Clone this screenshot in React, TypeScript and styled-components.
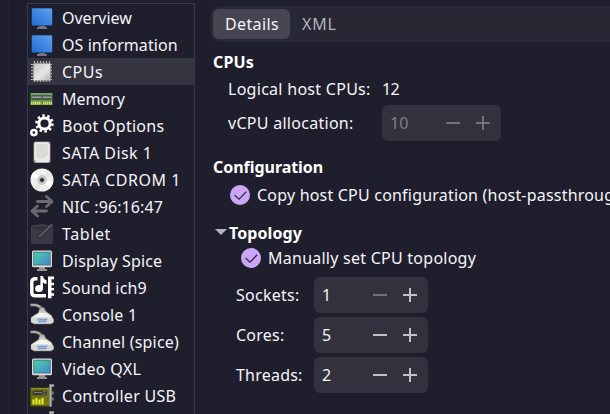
import React from 'react';
import styled, { createGlobalStyle } from 'styled-components';

const Global = createGlobalStyle`
  * { box-sizing: border-box; }
  html, body { margin: 0; height: 100%; overflow: hidden; background: #1f1e2d; }
  body { font: 16px/24px "Noto Sans", sans-serif; color: #f5f5f8; }
`;

const Window = styled.div`
  display: flex;
  width: 610px;
  height: 414px;
  overflow: hidden;
  background: linear-gradient(90deg, #1f1e2d 0 9px, #1b1a28 14px, #1f1e2d 16px);
`;

const DeviceList = styled.nav`
  flex: none;
  width: 168px;
  height: 440px;
  margin: 3px 0 0 27px;
  border: 1px solid #393846;
`;

const DeviceRow = styled.div<{ $selected?: boolean }>`
  display: flex;
  align-items: center;
  height: 27px;
  padding-left: 2px;
  gap: 8px;
  background: ${p => (p.$selected ? '#353441' : 'transparent')};
`;

const Icon = styled.svg`
  flex: none;
  width: 24px;
  height: 24px;
  display: block;
`;

const Text = styled.span<{ $track?: number; $dim?: boolean }>`
  white-space: nowrap;
  letter-spacing: ${p => p.$track ?? 0}px;
  color: ${p => (p.$dim ? '#b4b3ba' : 'inherit')};
`;

const Details = styled.main`
  flex: none;
  width: 430px;
  padding: 6px 0 0 15px;
`;

const TabBar = styled.div`
  display: flex;
  height: 36px;
  padding: 3px;
  border-radius: 9px;
  background: #282734;
`;

const Tab = styled.div<{ $active?: boolean }>`
  display: flex;
  align-items: center;
  height: 30px;
  padding: 0 12px;
  width: ${p => (p.$active ? '77px' : 'auto')};
  border-radius: 6px;
  background: ${p => (p.$active ? '#464551' : 'transparent')};
`;

const Heading = styled.h2<{ $top: number; $track?: number }>`
  display: flex;
  align-items: center;
  height: 24px;
  margin: ${p => p.$top}px 0 0 3px;
  font: bold 16px/24px "Noto Sans", sans-serif;
  letter-spacing: ${p => p.$track ?? 0}px;
  color: #fff;
`;

const Field = styled.div<{ $top: number; $indent: number; $label: number; $tall?: boolean }>`
  display: grid;
  grid-template-columns: ${p => p.$label}px auto;
  justify-content: start;
  align-items: center;
  height: ${p => (p.$tall ? 36 : 24)}px;
  margin: ${p => p.$top}px 0 0 ${p => p.$indent}px;
`;

const CheckRow = styled.div<{ $top: number; $indent: number; $gap: number }>`
  display: flex;
  align-items: center;
  gap: ${p => p.$gap}px;
  height: 24px;
  margin: ${p => p.$top}px 0 0 ${p => p.$indent}px;
`;

const CheckMark = styled.svg`
  flex: none;
  width: 20px;
  height: 20px;
`;

const Arrow = styled.svg`
  flex: none;
  width: 12px;
  height: 6px;
  margin: -2px 2px 0 2px;
`;

const SpinBox = styled.div<{ $width: number; $disabled?: boolean }>`
  display: flex;
  align-items: center;
  width: ${p => p.$width}px;
  height: 36px;
  padding: 0 11px 0 8px;
  border-radius: 6px;
  background: #32313e;
  color: ${p => (p.$disabled ? '#7f7e87' : 'inherit')};
`;

const SpinValue = styled.span`
  flex: 1;
`;

const SpinGlyph = styled.svg<{ $dim?: boolean }>`
  width: 14px;
  height: 14px;
  margin-left: 16px;
  fill: ${p => (p.$dim ? '#73727c' : '#c1c0c5')};
`;

type Kind = 'monitor' | 'chip' | 'memory' | 'gears' | 'disk' | 'cd' | 'net' | 'tablet' | 'display' | 'sound' | 'serial' | 'card';

const drawings: Record<Kind, React.ReactNode> = {
  monitor: (
    <>
      <defs>
        <linearGradient id="blue" x1="0" y1="1" x2="1" y2="0">
          <stop stopColor="#1f6fd6" /><stop offset="1" stopColor="#629fe9" />
        </linearGradient>
      </defs>
      <path d="M9 19h6v2h2v2H7v-2h2z" fill="#77767b" />
      <rect x="1.5" y="2" width="21" height="18" rx="1.5" fill="#164f96" />
      <rect x="2" y="2.5" width="20" height="16.5" rx="1" fill="url(#blue)" />
    </>
  ),
  chip: (
    <>
      <defs>
        <linearGradient id="chip" x1="0" y1="0" x2="1" y2="1">
          <stop stopColor="#c2c2c0" /><stop offset=".55" stopColor="#e6e6e4" /><stop offset="1" stopColor="#b4b4b2" />
        </linearGradient>
      </defs>
      <path d="M4.500 1v21M7.500 1v21M10.500 1v21M13.500 1v21M16.500 1v21M19.500 1v21M1 4.500h21M1 7.500h21M1 10.500h21M1 13.500h21M1 16.500h21M1 19.500h21" stroke="#b9b9b6" strokeWidth="1.1" />
      <rect x="3.200" y="3.200" width="17.600" height="17.600" rx="1" fill="url(#chip)" stroke="#7d7d7a" strokeWidth=".8" />
    </>
  ),
  memory: (
    <>
      <rect x=".5" y="6" width="22" height="12" fill="#468646" />
      <path d="M1 7h21" stroke="#a0bd93" />
      <path d="M2 8.200h9.300v4.600H2zM12.700 8.200H21v4.600h-8.300z" fill="#4b4b4b" />
      <path d="M2 10.200h9.300M12.700 10.200H21" stroke="#a3a39e" strokeWidth="1.400" />
      <path d="M12 7v10" stroke="#2f7b35" strokeWidth="1.200" />
      <path d="M1 14h21" stroke="#79a95b" />
      <path d="M1 16.2h10.5M13 16.2h9" stroke="#e1dc68" strokeWidth="3" strokeDasharray="1.5 .5" />
    </>
  ),
  gears: (
    <>
      <circle cx="14.5" cy="9.5" r="5.6" fill="none" stroke="#fff" strokeWidth="3" />
      <circle cx="14.5" cy="9.5" r="8" fill="none" stroke="#fff" strokeWidth="2.5" strokeDasharray="2.5 2.53" />
      <circle cx="3.9" cy="18.6" r="2.6" fill="none" stroke="#fff" strokeWidth="2.5" />
    </>
  ),
  disk: (
    <>
      <rect x="4" y="1" width="16" height="20.5" rx="1.5" fill="#e9e9e6" stroke="#b7b7b3" strokeWidth=".7" />
      <path d="M6 3q6-2 12 0 1 7 0 12l-4 3q-6 1-8-3-1-7 0-12z" fill="#dadad5" stroke="#eeeeea" />
      <circle cx="12" cy="12" r="1.300" fill="#e8e8e5" stroke="#cfcfcb" strokeWidth=".5" />
      <circle cx="5" cy="20" r=".7" fill="#555" /><circle cx="19" cy="2.5" r=".5" fill="#666" /><circle cx="19" cy="20" r=".5" fill="#777" />
    </>
  ),
  cd: (
    <>
      <circle cx="12" cy="12" r="11.5" fill="#efefed" />
      <path d="M12 12 0.8 9A11.5 11.5 0 0 1 4 3.8zM12 12 23.2 14A11.5 11.5 0 0 1 20 20z" fill="#fff" />
      <path d="M12 12 3 19A11.5 11.5 0 0 0 8 22.8zM12 12 18 2A11.5 11.5 0 0 1 22 6.500z" fill="#e4e4e1" />
      <circle cx="12" cy="12" r="4.4" fill="#d0d0cf" stroke="#b5b5b5" strokeWidth=".6" />
      <circle cx="12" cy="12" r="2.2" fill="#1f1e2d" stroke="#8d8d90" strokeWidth=".8" />
    </>
  ),
  net: (
    <path d="M7.500 6.500H21M16.500 1.500l5.500 5-5.500 5M16.500 16H3M7.500 11l-5.500 5 5.500 5" fill="none" stroke="#6b6a72" strokeWidth="2.8" strokeLinejoin="round" strokeLinecap="round" />
  ),
  tablet: (
    <>
      <path d="M9 2h6v2H9z" fill="#393742" />
      <rect x="1.500" y="3.500" width="21" height="18" rx="1" fill="#3b3843" stroke="#464450" strokeWidth=".7" />
      <path d="M2 6h20" stroke="#282633" />
      <path d="m9.500 14.500 12-11.500" stroke="#292734" strokeWidth="3.200" strokeLinecap="round" />
      <path d="m9.500 14.500 12-11.500" stroke="#5e5c66" strokeWidth="1.800" strokeLinecap="round" />
    </>
  ),
  display: (
    <>
      <defs>
        <linearGradient id="teal" x1="0" y1="0" x2="1" y2="1">
          <stop stopColor="#46d1ad" /><stop offset="1" stopColor="#4786c9" />
        </linearGradient>
      </defs>
      <path d="M9 18h6v2h2v2H7v-2h2z" fill="#92928e" />
      <rect x="2" y="1.500" width="20" height="16.800" rx="1.500" fill="#dcdcd7" />
      <rect x="3.800" y="3.200" width="16.400" height="12.800" fill="url(#teal)" stroke="#376b73" strokeWidth=".8" />
    </>
  ),
  sound: (
    <>
      <path d="M7.500 2.700H5.200Q1.800 2.700 1.800 5.900v10.500q0 3.400 3.400 3.400H16" fill="none" stroke="#fff" strokeWidth="3.400" />
      <ellipse cx="9" cy="12.500" rx="3.900" ry="3.600" fill="#fff" />
      <path d="M10.400 13V0h2.300q.7 3.200 3.800 4.600v3.400q-2.400-.4-3.600-1.800V13z" fill="#fff" />
      <path d="M18 .5h6v2.800h-2.500v3.500h2.500v2.400h-2.500v2.700h2.500v2.400h-2.500v2.900h2.500v2.500h-2.500v2.500H18z" fill="#fff" />
    </>
  ),
  serial: (
    <>
      <defs>
        <linearGradient id="plug" x1="0" y1="0" x2="0" y2="1">
          <stop stopColor="#a9a9a5" /><stop offset=".55" stopColor="#efefeb" /><stop offset="1" stopColor="#b2b2ae" />
        </linearGradient>
      </defs>
      <path d="M.5 2c5-.5 9.500.5 11.500 4.500" fill="none" stroke="#5e5e5d" strokeWidth="3" />
      <path d="M.5 2c5-.5 9.500.5 11.500 4.500" fill="none" stroke="#b4b4b1" strokeWidth="1.700" />
      <path d="M10 4.500h4l1.500 3.500 6 4.500 2 4.500v2.500L21 21H4l-3-2v-4.500l7.500-5z" fill="url(#plug)" stroke="#777774" strokeWidth=".5" />
      <path d="M5 13.500 10 10h5l5 3.500z" fill="#f4f4f0" />
      <path d="M1 15.500h4l1-1h12l1 1h4.500V19L21 20.500H4L1 19z" fill="#d6d6d2" />
      <path d="M7 15.300h11l-1.300 4.200H8.300z" fill="#a6c0e0" />
      <path d="M8.200 16.700h8.600M8.800 18.500h7.400" stroke="#547cab" strokeWidth="1" strokeDasharray="1 .7" />
    </>
  ),
  card: (
    <>
      <rect x=".8" y="4" width="19" height="18" fill="#74780c" stroke="#4e5400" />
      <path d="M1 4.500h18" stroke="#8d9020" />
      <rect x="2.500" y="6.500" width="14.500" height="5" rx="1" fill="#393a35" />
      <path d="M4 8.500h8" stroke="#77777a" /><path d="M13 7.700h3M12 10h4" stroke="#547d9d" />
      <path d="M3.500 20.500v-5M6.500 20.500v-6.500M9.500 20.500v-5M12.500 20.500v-6.500" stroke="#e6ed2b" strokeWidth="2.100" />
      <path d="M24 1.500h-3.500V22.500" fill="none" stroke="#6b6b6b" strokeWidth="3" />
      <path d="M24 1.500h-3.500V22.500" fill="none" stroke="#b5b5b0" strokeWidth="1.600" />
      <path d="M22.800 7.500v3M22.800 13.500v3" stroke="#888" strokeWidth="1.500" />
    </>
  ),
};

const devices: { label: string; icon: Kind; track?: number; selected?: boolean }[] = [
  { label: 'Overview', icon: 'monitor', track: 0 },
  { label: 'OS information', icon: 'monitor', track: 0.07 },
  { label: 'CPUs', icon: 'chip', track: 0.5, selected: true },
  { label: 'Memory', icon: 'memory', track: 0 },
  { label: 'Boot Options', icon: 'gears', track: 0.27 },
  { label: 'SATA Disk 1', icon: 'disk', track: 0.45 },
  { label: 'SATA CDROM 1', icon: 'cd', track: 0.58 },
  { label: 'NIC :96:16:47', icon: 'net', track: 0.1 },
  { label: 'Tablet', icon: 'tablet', track: 0.6 },
  { label: 'Display Spice', icon: 'display', track: 0.16 },
  { label: 'Sound ich9', icon: 'sound', track: 0.18 },
  { label: 'Console 1', icon: 'serial', track: 0.2 },
  { label: 'Channel (spice)', icon: 'serial', track: 0.2 },
  { label: 'Video QXL', icon: 'display', track: 0.3 },
  { label: 'Controller USB', icon: 'card', track: 0.27 },
  { label: '', icon: 'card' },
];

const Checked = () => (
  <CheckMark viewBox="0 0 20 20">
    <circle cx="10" cy="10" r="10" fill="#cba6f7" />
    <path d="m4.500 10 4.500 4.200 7.200-7.500" fill="none" stroke="#302b40" strokeWidth="1.300" />
  </CheckMark>
);

interface SpinProps { value: number; width: number; disabled?: boolean; atMin?: boolean }

const Spin = ({ value, width, disabled, atMin }: SpinProps) => (
  <SpinBox $width={width} $disabled={disabled}>
    <SpinValue>{value}</SpinValue>
    <SpinGlyph $dim={disabled || atMin} viewBox="0 0 14 14"><path d="M0 6h14v2H0z" /></SpinGlyph>
    <SpinGlyph $dim={disabled} viewBox="0 0 14 14"><path d="M0 6h6V0h2v6h6v2H8v6H6V8H0z" /></SpinGlyph>
  </SpinBox>
);

export default function App() {
  return (
    <>
      <Global />
      <Window>
        <DeviceList>
          {devices.map((d, i) => (
            <DeviceRow key={i} $selected={d.selected}>
              <Icon viewBox="0 0 24 24">{drawings[d.icon]}</Icon>
              <Text $track={d.track}>{d.label}</Text>
            </DeviceRow>
          ))}
        </DeviceList>
        <Details>
          <TabBar>
            <Tab $active><Text $track={0.38}>Details</Text></Tab>
            <Tab><Text $track={0.8} $dim>XML</Text></Tab>
          </TabBar>
          <Heading $top={8} $track={0.15}>CPUs</Heading>
          <Field $top={3} $indent={18} $label={154}>
            <Text $track={0.28}>Logical host CPUs:</Text>
            <Text $track={-0.6}>12</Text>
          </Field>
          <Field $top={4} $indent={18} $label={154} $tall>
            <Text $track={0.28}>vCPU allocation:</Text>
            <Spin value={10} width={119} disabled />
          </Field>
          <Heading $top={14} $track={-0.04}>Configuration</Heading>
          <CheckRow $top={4} $indent={20} $gap={7}>
            <Checked />
            <Text $track={0.2}>Copy host CPU configuration (host-passthrough)</Text>
          </CheckRow>
          <Heading $top={14} $track={0.1}><Arrow viewBox="0 0 12 6"><path d="M0 0h12L6 6z" fill="#b6b5bb" /></Arrow>Topology</Heading>
          <CheckRow $top={1} $indent={31} $gap={7}>
            <Checked />
            <Text $track={0.25}>Manually set CPU topology</Text>
          </CheckRow>
          <Field $top={7} $indent={26} $label={78} $tall>
            <Text $track={0.26}>Sockets:</Text>
            <Spin value={1} width={114} atMin />
          </Field>
          <Field $top={4} $indent={26} $label={78} $tall>
            <Text $track={0.24}>Cores:</Text>
            <Spin value={5} width={114} />
          </Field>
          <Field $top={4} $indent={26} $label={78} $tall>
            <Text $track={0.22}>Threads:</Text>
            <Spin value={2} width={114} />
          </Field>
        </Details>
      </Window>
    </>
  );
}
